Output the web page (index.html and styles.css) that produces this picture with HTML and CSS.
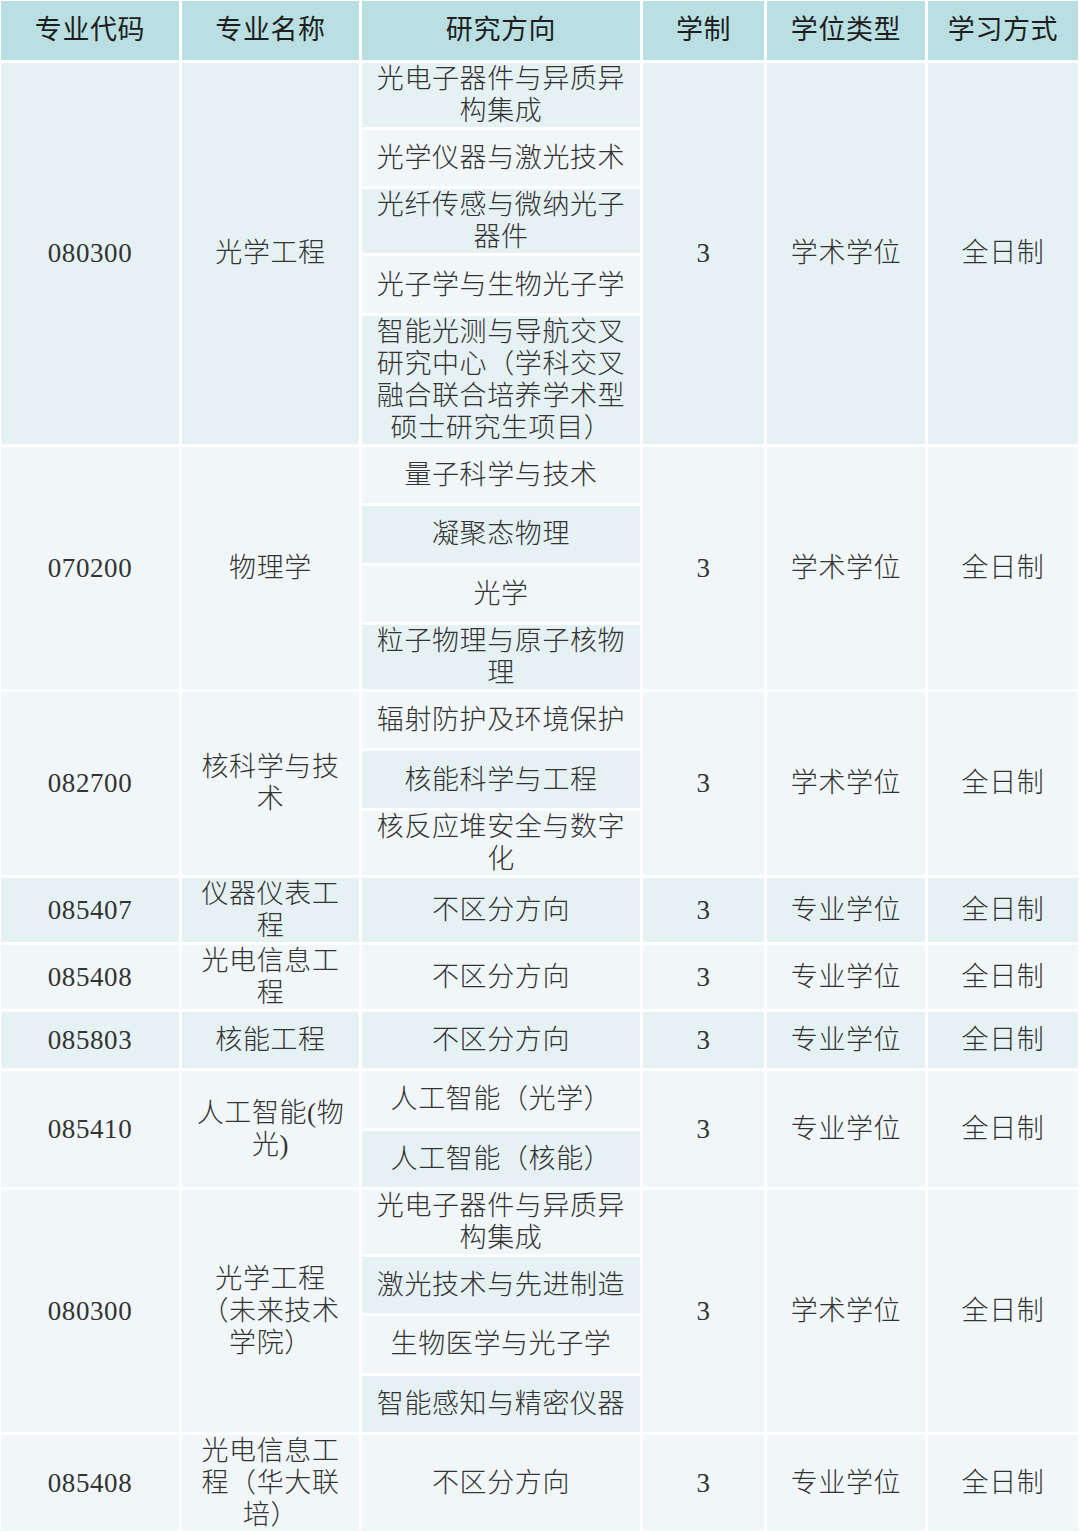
FILE: index.html
```html
<!DOCTYPE html>
<html lang="zh-CN">
<head>
<meta charset="utf-8">
<title>专业目录</title>
<link rel="stylesheet" href="styles.css">
</head>
<body>
<table class="majors">
  <colgroup>
    <col class="c-code">
    <col class="c-name">
    <col class="c-dir">
    <col class="c-year">
    <col class="c-type">
    <col class="c-mode">
  </colgroup>
  <thead>
    <tr>
      <th>专业代码</th>
      <th>专业名称</th>
      <th>研究方向</th>
      <th>学制</th>
      <th>学位类型</th>
      <th>学习方式</th>
    </tr>
  </thead>
  <tbody>
    <tr>
      <td rowspan="5">080300</td>
      <td rowspan="5">光学工程</td>
      <td>光电子器件与异质异构集成</td>
      <td rowspan="5">3</td>
      <td rowspan="5">学术学位</td>
      <td rowspan="5">全日制</td>
    </tr>
    <tr><td>光学仪器与激光技术</td></tr>
    <tr><td>光纤传感与微纳光子器件</td></tr>
    <tr><td>光子学与生物光子学</td></tr>
    <tr><td>智能光测与导航交叉研究中心（学科交叉融合联合培养学术型硕士研究生项目）</td></tr>

    <tr>
      <td rowspan="4">070200</td>
      <td rowspan="4">物理学</td>
      <td>量子科学与技术</td>
      <td rowspan="4">3</td>
      <td rowspan="4">学术学位</td>
      <td rowspan="4">全日制</td>
    </tr>
    <tr><td>凝聚态物理</td></tr>
    <tr><td>光学</td></tr>
    <tr><td>粒子物理与原子核物理</td></tr>

    <tr>
      <td rowspan="3">082700</td>
      <td rowspan="3">核科学与技术</td>
      <td>辐射防护及环境保护</td>
      <td rowspan="3">3</td>
      <td rowspan="3">学术学位</td>
      <td rowspan="3">全日制</td>
    </tr>
    <tr><td>核能科学与工程</td></tr>
    <tr><td>核反应堆安全与数字化</td></tr>

    <tr>
      <td>085407</td>
      <td>仪器仪表工程</td>
      <td>不区分方向</td>
      <td>3</td>
      <td>专业学位</td>
      <td>全日制</td>
    </tr>
    <tr>
      <td>085408</td>
      <td>光电信息工程</td>
      <td>不区分方向</td>
      <td>3</td>
      <td>专业学位</td>
      <td>全日制</td>
    </tr>
    <tr>
      <td>085803</td>
      <td>核能工程</td>
      <td>不区分方向</td>
      <td>3</td>
      <td>专业学位</td>
      <td>全日制</td>
    </tr>

    <tr>
      <td rowspan="2">085410</td>
      <td rowspan="2">人工智能(物光)</td>
      <td>人工智能（光学）</td>
      <td rowspan="2">3</td>
      <td rowspan="2">专业学位</td>
      <td rowspan="2">全日制</td>
    </tr>
    <tr><td>人工智能（核能）</td></tr>

    <tr>
      <td rowspan="4">080300</td>
      <td rowspan="4">光学工程（未来技术学院）</td>
      <td>光电子器件与异质异构集成</td>
      <td rowspan="4">3</td>
      <td rowspan="4">学术学位</td>
      <td rowspan="4">全日制</td>
    </tr>
    <tr><td>激光技术与先进制造</td></tr>
    <tr><td>生物医学与光子学</td></tr>
    <tr><td>智能感知与精密仪器</td></tr>

    <tr>
      <td>085408</td>
      <td>光电信息工程（华大联培）</td>
      <td>不区分方向</td>
      <td>3</td>
      <td>专业学位</td>
      <td>全日制</td>
    </tr>
  </tbody>
</table>
</body>
</html>
```
FILE: styles.css
```css
html, body {
  margin: 0;
  padding: 0;
  background: #ffffff;
}

body {
  font-family: "Liberation Serif", "Noto Sans CJK SC", serif;
  font-size: 27px;
  font-weight: 300;
  letter-spacing: 0.6px;
  color: #333333;
}

.majors {
  table-layout: fixed;
  width: 1083px;
  margin: -2px 0 0 -2px;
  border-collapse: separate;
  border-spacing: 3px;
}

.c-code { width: 178px; }
.c-name { width: 177px; }
.c-dir  { width: 278px; }
.c-year { width: 121px; }
.c-type { width: 158px; }
.c-mode { width: 150px; }

.majors th,
.majors td {
  padding: 0 10px;
  text-align: center;
  vertical-align: middle;
  line-height: 32px;
}

.majors th {
  height: 58px;
  background: #b9dfe2;
  color: #1e1e1e;
  font-weight: 400;
  border-bottom: 1px solid #b9dfe2;
}

.majors tbody tr {
  height: 56.4px;
}

.majors tbody tr:nth-child(odd) td {
  background: #e6f1f3;
}

.majors tbody tr:nth-child(even) td {
  background: #f1f7f9;
}
```
